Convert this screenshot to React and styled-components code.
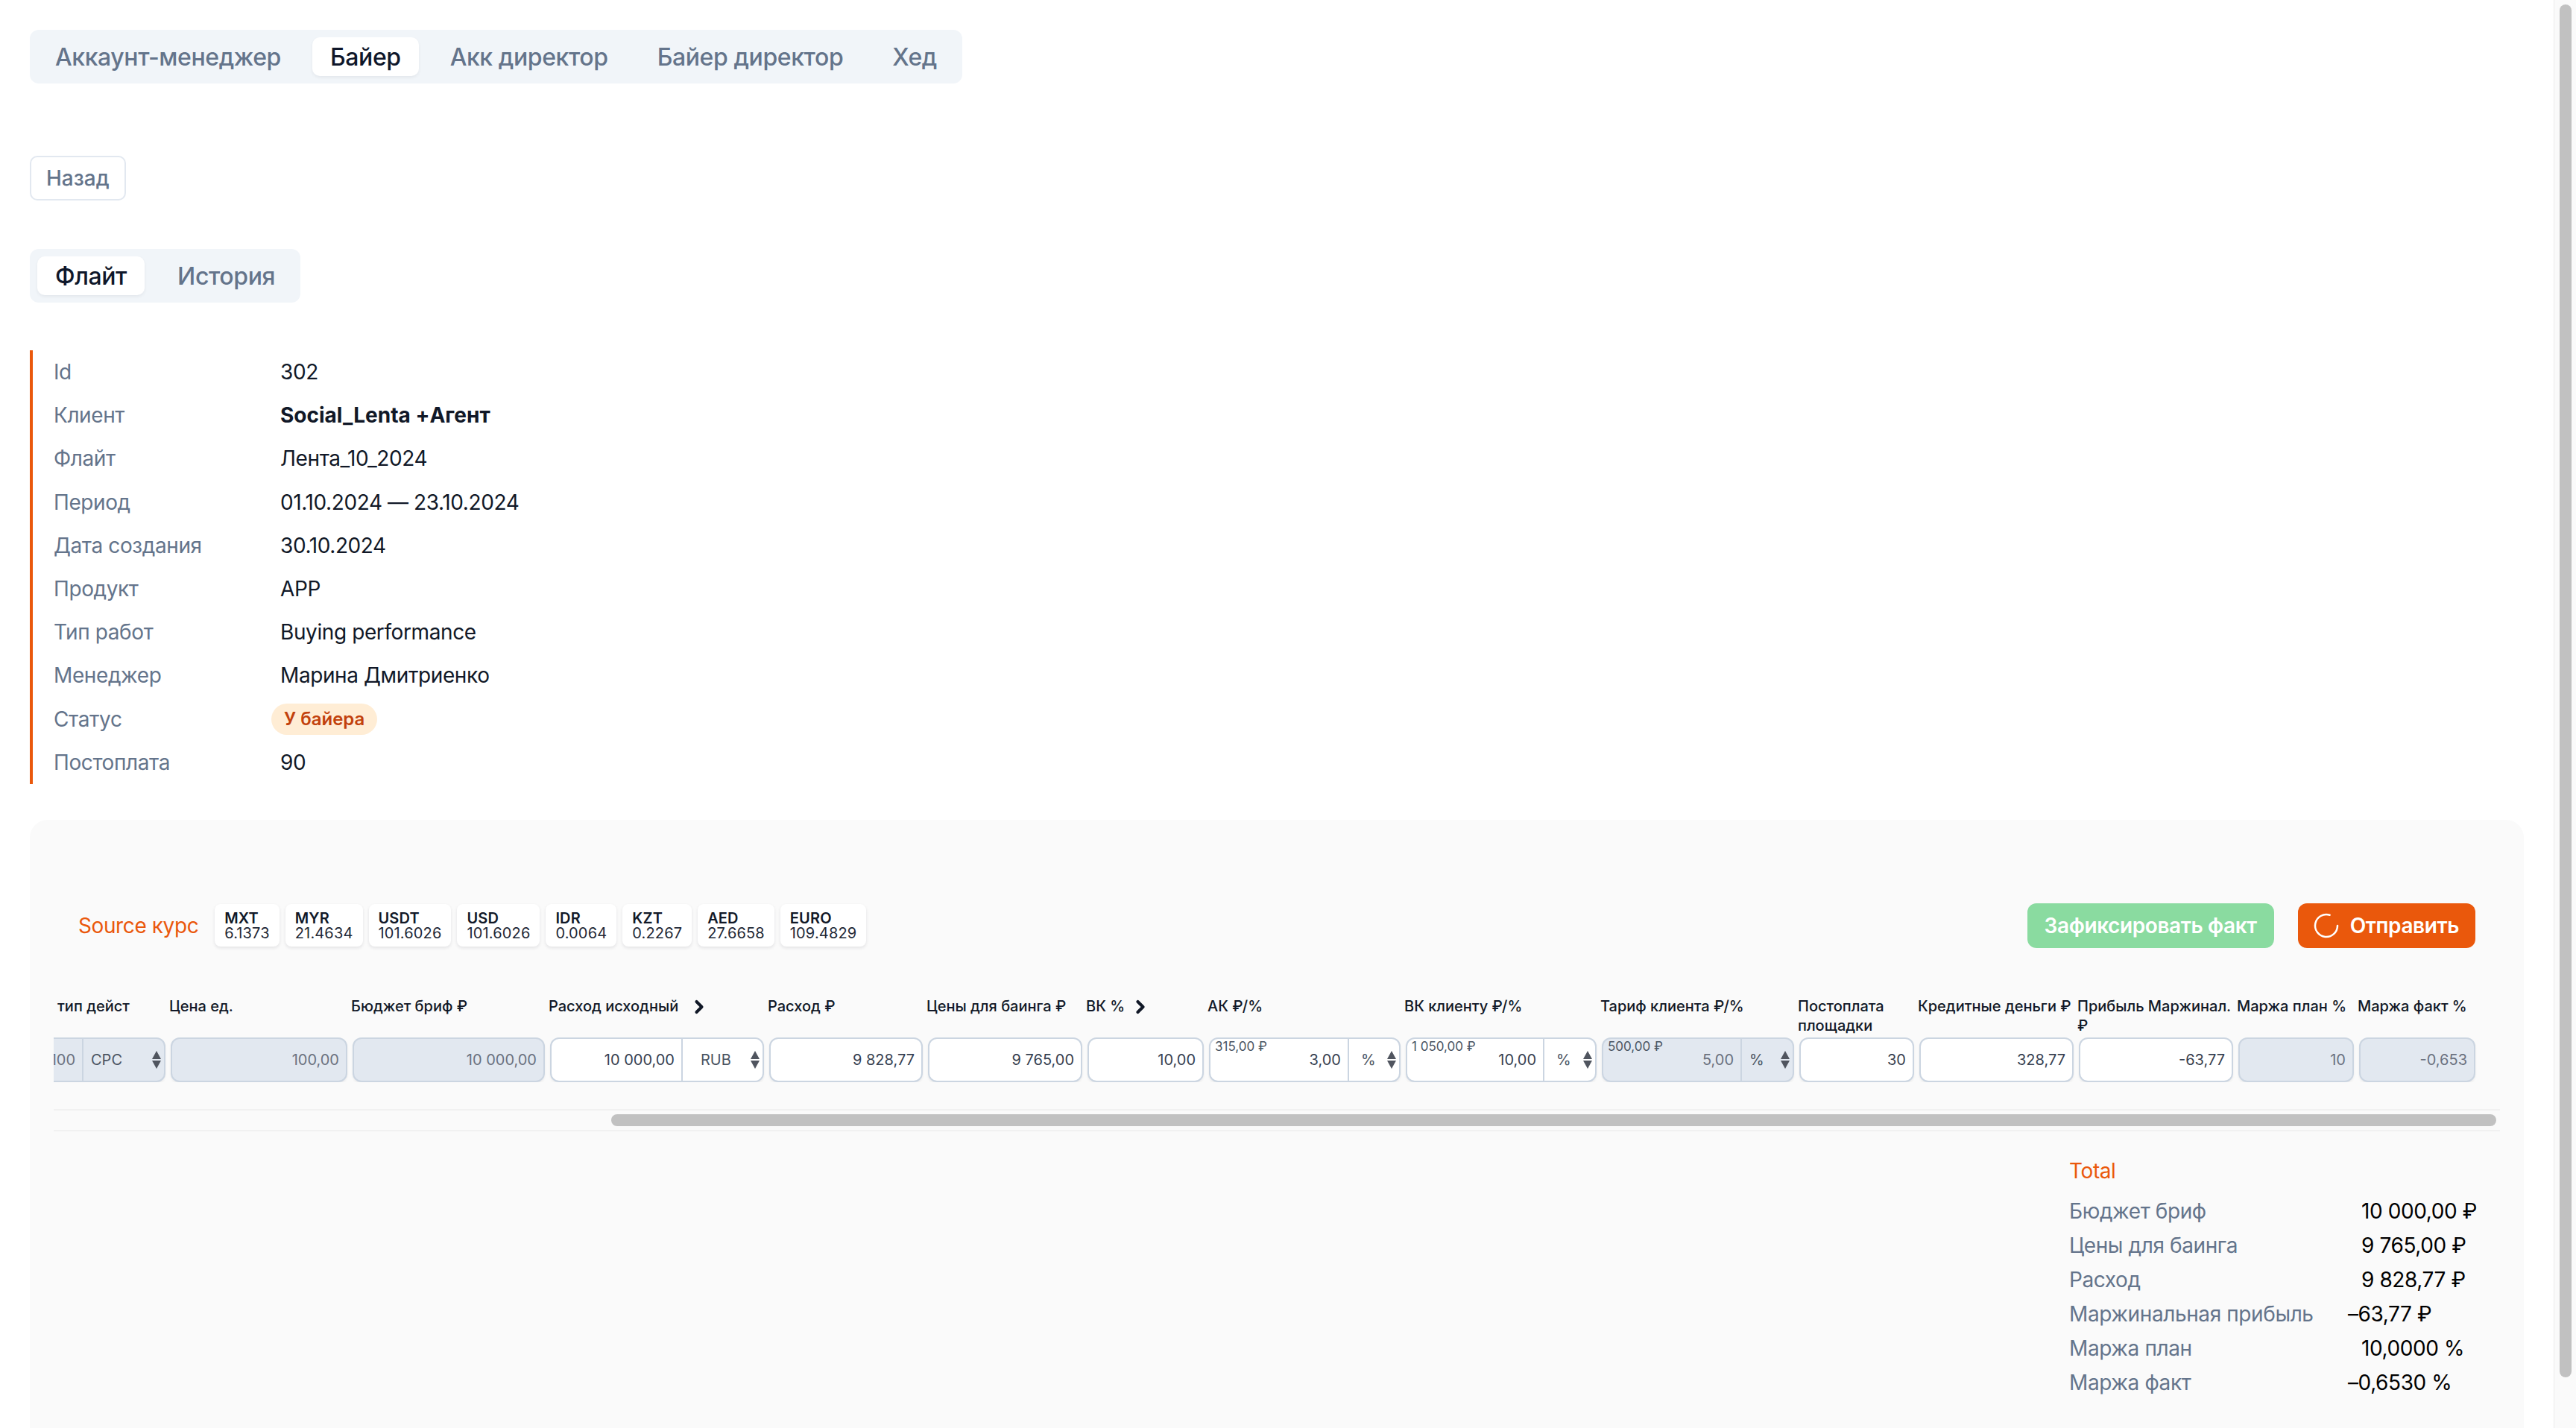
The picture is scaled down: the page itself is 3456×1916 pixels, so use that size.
import React from 'react';
import styled, { createGlobalStyle } from 'styled-components';
import { ChevronRight, LoaderCircle } from 'lucide-react';

const GlobalStyle = createGlobalStyle`
  html, body {
    margin: 0;
    height: 100%;
    overflow: hidden;
    background: #fff;
  }
  body {
    font-family: Inter, "Noto Sans", sans-serif;
    font-size: 28px;
    letter-spacing: -0.4px;
    color: #111827;
  }
`;

const Layout = styled.div`
  display: flex;
  height: 1916px;
  overflow: hidden;
`;

const Page = styled.main`
  flex: 1;
  min-width: 0;
  padding: 40px 40px 0;
`;

const PageScroll = styled.div`
  width: 30px;
  box-sizing: border-box;
  padding: 6px 6px 0 7px;
  background: #fafafa;
  border-left: 1px solid #ececec;
`;

const PageThumb = styled.div`
  height: 1842px;
  border-radius: 8px;
  background: #c1c1c1;
`;

const TabBar = styled.div`
  display: inline-flex;
  gap: 18px;
  height: 72px;
  box-sizing: border-box;
  padding: 10px;
  border-radius: 12px;
  background: #f1f5f9;
`;

const Tab = styled.div`
  display: flex;
  align-items: center;
  padding: 0 24px;
  border-radius: 10px;
  font-size: 32px;
  font-weight: 500;
  color: ${p => (p.$active ? '#0f172a' : '#64748b')};
  background: ${p => (p.$active ? '#fff' : 'transparent')};
  box-shadow: ${p => (p.$active ? '0 2px 4px rgba(15, 23, 42, 0.06)' : 'none')};
`;

const BackButton = styled.div`
  display: flex;
  align-items: center;
  width: fit-content;
  height: 60px;
  box-sizing: border-box;
  margin-top: 97px;
  padding: 0 20px;
  border: 2px solid #e2e8f0;
  border-radius: 10px;
  font-size: 28px;
  font-weight: 500;
  letter-spacing: 0;
  color: #64748b;
  background: #fff;
`;

const SubTabs = styled(TabBar)`
  display: flex;
  width: fit-content;
  gap: 20px;
  margin-top: 65px;
`;

const InfoList = styled.div`
  display: grid;
  grid-template-columns: 304px 1fr;
  grid-auto-rows: 58.2px;
  align-items: center;
  width: fit-content;
  margin-top: 64px;
  padding-left: 28px;
  border-left: 4px solid #ea580c;
`;

const InfoLabel = styled.div`
  color: #64748b;
`;

const InfoValue = styled.div`
  color: #111827;
  font-weight: ${p => (p.$bold ? 700 : 400)};
  letter-spacing: ${p => (p.$bold ? 0 : '-0.4px')};
`;

const Badge = styled.span`
  display: inline-flex;
  align-items: center;
  height: 42px;
  margin-left: -12px;
  padding: 0 17px;
  border-radius: 21px;
  font-size: 24px;
  font-weight: 600;
  letter-spacing: 0;
  color: #c2410c;
  background: #ffedd5;
`;

const Panel = styled.section`
  margin-top: 48px;
  height: 900px;
  padding: 112px 32px 0;
  border-radius: 24px;
  background: #fafafa;
`;

const Toolbar = styled.div`
  display: flex;
  align-items: center;
  height: 60px;
  padding: 0 33px;
`;

const RatesTitle = styled.div`
  margin-right: 22px;
  color: #ea580c;
`;

const Rates = styled.div`
  display: flex;
  gap: 8px;
`;

const Rate = styled.div`
  height: 57px;
  box-sizing: border-box;
  padding: 9px 13px 0;
  border-radius: 8px;
  font-size: 20px;
  line-height: 20px;
  letter-spacing: 0.15px;
  color: #1f2937;
  background: #fff;
  box-shadow: 0 2px 4px rgba(15, 23, 42, 0.1);

  b {
    display: block;
    font-weight: 600;
    color: #111827;
  }
`;

const ToolbarActions = styled.div`
  display: flex;
  gap: 32px;
  margin-left: auto;
`;

const ActionButton = styled.div`
  display: flex;
  align-items: center;
  gap: 16px;
  height: 60px;
  padding: 0 ${p => p.$pad}px;
  border-radius: 12px;
  font-weight: 600;
  color: #fff;
  background: ${p => p.$bg};
`;

const TableScroll = styled.div`
  margin-top: 65px;
  overflow: hidden;
  letter-spacing: 0;
`;

const Grid = styled.div`
  display: grid;
  grid-template-columns: 210px 237px 258px 287px 206px 207px 156px 257px 256px 258px 154px 207px 207px 155px 156px;
  column-gap: 7px;
  margin-left: -60px;
`;

const Head = styled.div`
  display: flex;
  align-items: flex-start;
  height: 55px;
  margin-left: -2px;
  padding-left: ${p => p.$indent || 0}px;
  font-size: 20px;
  font-weight: 500;
  line-height: 26px;
  color: #111827;

  svg {
    flex: none;
    margin-left: ${p => p.$iconGap || 0}px;
  }
`;

const Field = styled.div`
  position: relative;
  display: flex;
  align-items: center;
  justify-content: flex-end;
  height: 60px;
  box-sizing: border-box;
  border: 2px solid #cbd5e1;
  border-radius: 12px;
  font-size: 20px;
  overflow: hidden;
  color: ${p => (p.$off ? '#6b7280' : '#374151')};
  background: ${p => (p.$off ? '#e2e8f0' : '#fff')};
  box-shadow: 0 2px 3px rgba(15, 23, 42, 0.06);
`;

const FieldValue = styled.div`
  flex: 1;
  padding-right: 9px;
  text-align: right;
  white-space: nowrap;
`;

const FieldHint = styled.div`
  position: absolute;
  top: 0;
  left: 6px;
  font-size: 17px;
  line-height: 20px;
  color: #4b5563;
`;

const Unit = styled.div`
  display: flex;
  align-items: center;
  justify-content: space-between;
  align-self: stretch;
  width: ${p => p.$width}px;
  box-sizing: border-box;
  padding: 0 4px 0 ${p => p.$pad}px;
  border-left: 2px solid #cbd5e1;
  color: #4b5563;
`;

const HorizontalTrack = styled.div`
  display: flex;
  align-items: center;
  height: 26px;
  margin-top: 36px;
  padding-left: 748px;
  border-top: 2px solid #f1f1f1;
  border-bottom: 2px solid #f1f1f1;
  background: #fafafa;
`;

const HorizontalThumb = styled.div`
  width: 2529px;
  height: 16px;
  border-radius: 8px;
  background: #c1c1c1;
`;

const Total = styled.div`
  width: 545px;
  margin: 36px 33px 0 auto;
`;

const TotalTitle = styled.div`
  height: 34px;
  line-height: 34px;
  margin-bottom: 14px;
  color: #ea580c;
`;

const TotalGrid = styled.div`
  display: grid;
  grid-template-columns: 392px 1fr;
  grid-auto-rows: 46px;
  align-items: center;
  white-space: nowrap;
`;

const TotalValue = styled.div`
  margin-left: ${p => (p.$negative ? -18 : 0)}px;
  color: #000;
`;

const Arrows = () => (
  <svg width="12" height="24" viewBox="0 0 12 24" fill="#50555f">
    <path d="M6 0l6 11H0z" />
    <path d="M6 24l6-11H0z" />
  </svg>
);

const tabs = ['Аккаунт-менеджер', 'Байер', 'Акк директор', 'Байер директор', 'Хед'];

const info = [
  ['Id', '302'],
  ['Клиент', 'Social_Lenta +Агент', true],
  ['Флайт', 'Лента_10_2024'],
  ['Период', '01.10.2024 — 23.10.2024'],
  ['Дата создания', '30.10.2024'],
  ['Продукт', 'APP'],
  ['Тип работ', 'Buying performance'],
  ['Менеджер', 'Марина Дмитриенко'],
];

const rates = [
  ['MXT', '6.1373'],
  ['MYR', '21.4634'],
  ['USDT', '101.6026'],
  ['USD', '101.6026'],
  ['IDR', '0.0064'],
  ['KZT', '0.2267'],
  ['AED', '27.6658'],
  ['EURO', '109.4829'],
];

const heads = [
  { text: 'тип дейст', indent: 67 },
  { text: 'Цена ед.' },
  { text: 'Бюджет бриф ₽' },
  { text: 'Расход исходный', icon: true, iconGap: 14 },
  { text: 'Расход ₽' },
  { text: 'Цены для баинга ₽' },
  { text: 'ВК %', icon: true, iconGap: 7 },
  { text: 'АК ₽/%' },
  { text: 'ВК клиенту ₽/%' },
  { text: 'Тариф клиента ₽/%' },
  { text: 'Постоплата площадки' },
  { text: 'Кредитные деньги ₽' },
  { text: 'Прибыль Маржинал. ₽' },
  { text: 'Маржа план %' },
  { text: 'Маржа факт %' },
];

const fields = [
  { value: '100', off: true, unit: 'CPC', unitWidth: 110, unitPad: 10 },
  { value: '100,00', off: true },
  { value: '10 000,00', off: true },
  { value: '10 000,00', unit: 'RUB', unitWidth: 109, unitPad: 24 },
  { value: '9 828,77' },
  { value: '9 765,00' },
  { value: '10,00' },
  { value: '3,00', hint: '315,00 ₽', unit: '%', unitWidth: 69, unitPad: 16 },
  { value: '10,00', hint: '1 050,00 ₽', unit: '%', unitWidth: 70, unitPad: 16 },
  { value: '5,00', hint: '500,00 ₽', off: true, unit: '%', unitWidth: 70, unitPad: 10 },
  { value: '30' },
  { value: '328,77' },
  { value: '-63,77' },
  { value: '10', off: true },
  { value: '-0,653', off: true },
];

const totals = [
  ['Бюджет бриф', '10 000,00 ₽'],
  ['Цены для баинга', '9 765,00 ₽'],
  ['Расход', '9 828,77 ₽'],
  ['Маржинальная прибыль', '–63,77 ₽', true],
  ['Маржа план', '10,0000 %'],
  ['Маржа факт', '–0,6530 %', true],
];

const App = () => (
  <Layout>
    <GlobalStyle />
    <Page>
      <TabBar>
        {tabs.map(t => (
          <Tab key={t} $active={t === 'Байер'}>
            {t}
          </Tab>
        ))}
      </TabBar>

      <BackButton>Назад</BackButton>

      <SubTabs>
        <Tab $active>Флайт</Tab>
        <Tab>История</Tab>
      </SubTabs>

      <InfoList>
        {info.map(([label, value, bold]) => (
          <React.Fragment key={label}>
            <InfoLabel>{label}</InfoLabel>
            <InfoValue $bold={bold}>{value}</InfoValue>
          </React.Fragment>
        ))}
        <InfoLabel>Статус</InfoLabel>
        <InfoValue>
          <Badge>У байера</Badge>
        </InfoValue>
        <InfoLabel>Постоплата</InfoLabel>
        <InfoValue>90</InfoValue>
      </InfoList>

      <Panel>
        <Toolbar>
          <RatesTitle>Source курс</RatesTitle>
          <Rates>
            {rates.map(([code, value]) => (
              <Rate key={code}>
                <b>{code}</b>
                {value}
              </Rate>
            ))}
          </Rates>
          <ToolbarActions>
            <ActionButton $bg="#8adba0" $pad={23}>
              Зафиксировать факт
            </ActionButton>
            <ActionButton $bg="#ea580c" $pad={22}>
              <LoaderCircle size={40} strokeWidth={1.5} style={{ margin: '0 -4px' }} />
              Отправить
            </ActionButton>
          </ToolbarActions>
        </Toolbar>

        <TableScroll>
          <Grid>
            {heads.map(h => (
              <Head key={h.text} $indent={h.indent} $iconGap={h.iconGap}>
                <span>{h.text}</span>
                {h.icon && <ChevronRight size={28} strokeWidth={3.5} color="#111827" />}
              </Head>
            ))}
            {fields.map((f, i) => (
              <Field key={i} $off={f.off}>
                {f.hint && <FieldHint>{f.hint}</FieldHint>}
                <FieldValue>{f.value}</FieldValue>
                {f.unit && (
                  <Unit $width={f.unitWidth} $pad={f.unitPad}>
                    {f.unit}
                    <Arrows />
                  </Unit>
                )}
              </Field>
            ))}
          </Grid>
        </TableScroll>

        <HorizontalTrack>
          <HorizontalThumb />
        </HorizontalTrack>

        <Total>
          <TotalTitle>Total</TotalTitle>
          <TotalGrid>
            {totals.map(([label, value, negative]) => (
              <React.Fragment key={label}>
                <InfoLabel>{label}</InfoLabel>
                <TotalValue $negative={negative}>{value}</TotalValue>
              </React.Fragment>
            ))}
          </TotalGrid>
        </Total>
      </Panel>
    </Page>
    <PageScroll>
      <PageThumb />
    </PageScroll>
  </Layout>
);

export default App;
